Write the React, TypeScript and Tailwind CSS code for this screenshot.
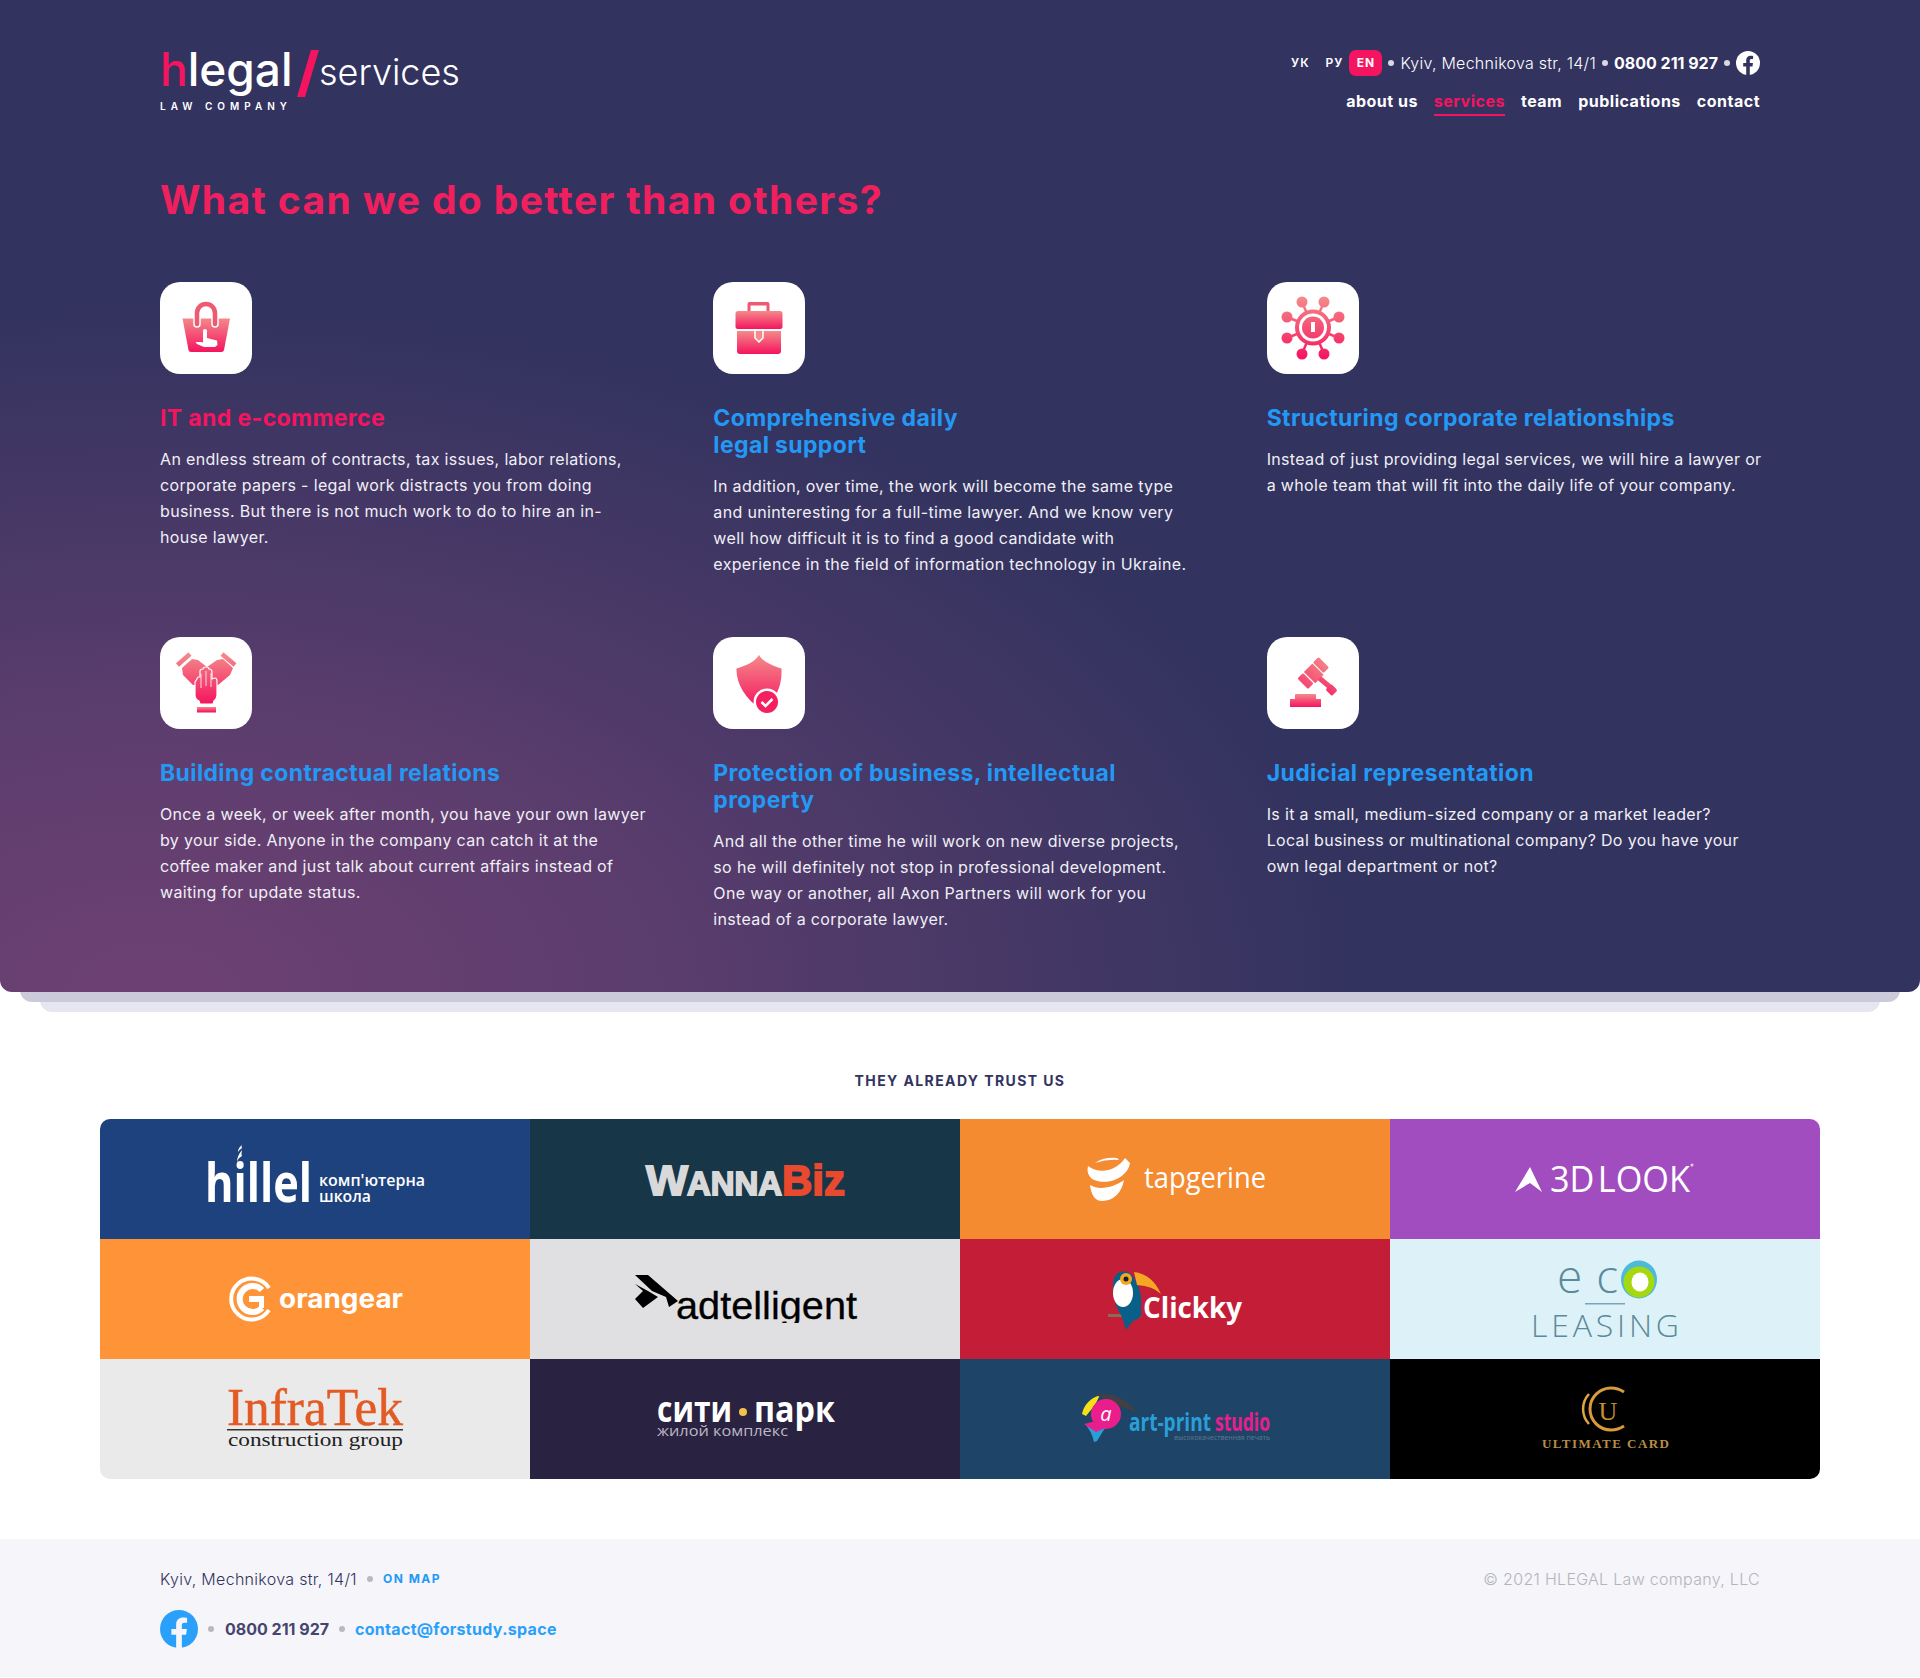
import React from 'react';

const font = "font-['Inter','Noto_Sans',sans-serif]";

const IconGrad = ({ id, y1 = 22, y2 = 72 }: { id: string; y1?: number; y2?: number }) => (
  <defs>
    <linearGradient id={id} x1="0" y1={y1} x2="0" y2={y2} gradientUnits="userSpaceOnUse">
      <stop offset="0" stopColor="#f48a8a" />
      <stop offset="1" stopColor="#f5145f" />
    </linearGradient>
  </defs>
);

const BagIcon = () => (
  <svg viewBox="0 0 92 92" className="h-[92px] w-[92px]">
    <IconGrad id="g1" y1={36} y2={70} />
    <path d="M22.500 36.500h47.500l-6 31.500q-.5 2-2.500 2H31q-2 0-2.500-2z" fill="url(#g1)" />
    <path d="M37 42V31a9 9 0 0 1 18 0v11" fill="none" stroke="#fff" strokeWidth="7.500" strokeLinecap="round" />
    <path d="M37 42V31a9 9 0 0 1 18 0v11" fill="none" stroke="#ee5a72" strokeWidth="4.500" strokeLinecap="round" />
    <path d="M43 48q2-2 4 0v8l10 2.500.5 4.500-2.500 2H44l-7-3-1.500-2h5.500l2 .5z" fill="#fff" />
  </svg>
);

const CaseIcon = () => (
  <svg viewBox="0 0 92 92" className="h-[92px] w-[92px]">
    <IconGrad id="g2b" y1={49} y2={72} />
    <IconGrad id="g2c" y1={29} y2={47} />
    <path d="M34.500 29v-7q0-2 2-2h18q2 0 2 2v7h-3v-5.500H37.500V29z" fill="#ee5a72" />
    <rect x="22.500" y="29" width="47" height="18" rx="2.500" fill="url(#g2c)" />
    <path d="M24 49h44v20q0 3-3 3H27q-3 0-3-3z" fill="url(#g2b)" />
    <path d="M42 49v7l4 4 4-4v-7" fill="#f58a8a" stroke="#fff" strokeWidth="1.500" />
  </svg>
);

const VirusIcon = () => {
  const nodes = [[35, 20], [57, 20], [20, 35], [72, 35], [20, 56], [72, 56], [35, 72], [57, 72]];
  return (
    <svg viewBox="0 0 92 92" className="h-[92px] w-[92px]">
      <IconGrad id="g3" y1={15} y2={77} />
      {nodes.map(([x, y]) => (
        <g key={`${x}-${y}`}>
          <line x1={x} y1={y} x2="46" y2="45.500" stroke="url(#g3)" strokeWidth="2.500" />
          <circle cx={x} cy={y} r="5.500" fill="url(#g3)" />
        </g>
      ))}
      <circle cx="46" cy="45.500" r="18" fill="url(#g3)" />
      <circle cx="46" cy="45.500" r="14" fill="#fff" />
      <circle cx="46" cy="45.500" r="11" fill="url(#g3)" />
      <rect x="44" y="40" width="4" height="10" fill="#fff" />
    </svg>
  );
};

const HandsIcon = () => (
  <svg viewBox="0 0 92 92" className="h-[92px] w-[92px]">
    <IconGrad id="g4" y1={17} y2={67} />
    <IconGrad id="g4b" y1={70} y2={75} />
    <g stroke="url(#g4)" strokeWidth="4.500">
      <line x1="17.500" y1="28" x2="30" y2="17" />
      <line x1="62" y1="17" x2="75" y2="28" />
    </g>
    <path d="M22 31 32 22l6 1 9 7 10-7 6-1 10 9-3 7-12 10H33L23 38z" fill="url(#g4)" />
    <path d="M37 42q0-2 2-2h1v-6q0-2 3-2 0-2 3-2t3 2q3 0 3 3v7l3-1q2 0 2 3v14q0 4-3 6l-1 3H40l-1-3q-4-2-4-6V45z" fill="url(#g4)" stroke="#fff" strokeWidth="1.200" />
    <g stroke="#fff" strokeWidth="1" opacity="0.8">
      <line x1="41" y1="37" x2="41" y2="51" />
      <line x1="46" y1="34" x2="46" y2="49" />
      <line x1="51" y1="36" x2="51" y2="50" />
    </g>
    <rect x="37" y="70" width="19" height="5.500" fill="url(#g4b)" />
  </svg>
);

const ShieldIcon = () => (
  <svg viewBox="0 0 92 92" className="h-[92px] w-[92px]">
    <IconGrad id="g5" y1={18} y2={72} />
    <path d="M46 18c4 7 14 11 22.500 13.500C69 42 67 50 63 58L48 72C32 62 23 46 23.500 31.500 32 29 42 25 46 18z" fill="url(#g5)" />
    <circle cx="54" cy="65" r="13.500" fill="#fff" />
    <circle cx="54" cy="65" r="11" fill="#f5205f" />
    <path d="M48.500 65l4 4 7-7" fill="none" stroke="#fff" strokeWidth="2.500" />
  </svg>
);

const GavelIcon = () => (
  <svg viewBox="0 0 92 92" className="h-[92px] w-[92px]">
    <IconGrad id="g6" y1={20} y2={70} />
    <IconGrad id="g6b" y1={57} y2={70} />
    <g fill="url(#g6)">
      <rect x="46.500" y="24" width="15" height="8" rx="1.500" transform="rotate(45 54 28)" />
      <rect x="31" y="40" width="15" height="8" rx="1.500" transform="rotate(45 38.500 44)" />
      <rect x="38.800" y="30.300" width="16" height="12" transform="rotate(45 46.800 36.300)" />
      <rect x="50" y="45" width="20" height="5" rx="1" transform="rotate(40 60 47.500)" />
      <rect x="60" y="49" width="9" height="8" rx="1.500" transform="rotate(45 64.500 53)" />
    </g>
    <path d="M29 57h19q1 0 1 1v5H28v-5q0-1 1-1z" fill="url(#g6b)" />
    <rect x="23" y="62" width="31" height="8" fill="url(#g6b)" />
  </svg>
);

const cards = [
  {
    icon: <BagIcon />,
    title: ['IT and e-commerce'],
    active: true,
    text: ['An endless stream of contracts, tax issues, labor relations,', 'corporate papers - legal work distracts you from doing', 'business. But there is not much work to do to hire an in-', 'house lawyer.'],
  },
  {
    icon: <CaseIcon />,
    title: ['Comprehensive daily', 'legal support'],
    text: ['In addition, over time, the work will become the same type', 'and uninteresting for a full-time lawyer. And we know very', 'well how difficult it is to find a good candidate with', 'experience in the field of information technology in Ukraine.'],
  },
  {
    icon: <VirusIcon />,
    title: ['Structuring corporate relationships'],
    text: ['Instead of just providing legal services, we will hire a lawyer or', 'a whole team that will fit into the daily life of your company.'],
  },
  {
    icon: <HandsIcon />,
    title: ['Building contractual relations'],
    text: ['Once a week, or week after month, you have your own lawyer', 'by your side. Anyone in the company can catch it at the', 'coffee maker and just talk about current affairs instead of', 'waiting for update status.'],
  },
  {
    icon: <ShieldIcon />,
    title: ['Protection of business, intellectual', 'property'],
    text: ['And all the other time he will work on new diverse projects,', 'so he will definitely not stop in professional development.', 'One way or another, all Axon Partners will work for you', 'instead of a corporate lawyer.'],
  },
  {
    icon: <GavelIcon />,
    title: ['Judicial representation'],
    text: ['Is it a small, medium-sized company or a market leader?', 'Local business or multinational company? Do you have your', 'own legal department or not?'],
  },
];

const Fb = ({ size, bg, fg }: { size: string; bg: string; fg: string }) => (
  <svg viewBox="0 0 40 40" className={size}>
    <circle cx="20" cy="20" r="20" fill={bg} />
    <path d="M17 40V26h-5v-6h5v-4.500C17 10.500 20 8 24.500 8c2 0 3.500.3 4 .4v5h-2.800c-2.200 0-2.700 1.200-2.700 2.800V20h5.300l-.8 6H23v14z" fill={fg} />
  </svg>
);

const Dot = ({ color }: { color: string }) => <span className={`h-[6px] w-[6px] rounded-full ${color}`} />;

const Logo = ({ bg, children }: { bg: string; children: React.ReactNode }) => (
  <div className={`flex h-[120px] items-center justify-center ${bg}`}>
    <svg viewBox="0 0 430 120" className="h-[120px] w-[430px]">
      {children}
    </svg>
  </div>
);

const logos = [
  <Logo key="hillel" bg="bg-[#1d427e]">
    <text x="105" y="83" fontFamily="Open Sans" fontWeight="700" fontSize="54" fill="#fff" textLength="107" lengthAdjust="spacingAndGlyphs">hillel</text>
    <path d="M137 43q0-6 5-12-1 4 0 6-4 2-5 6zM138 33q0-4 4-7-1 2 0 3-3 2-4 4z" fill="#fff" />
    <text x="219" y="67" fontFamily="Open Sans" fontWeight="600" fontSize="16" fill="#fff" textLength="106" lengthAdjust="spacingAndGlyphs">комп'ютерна</text>
    <text x="219" y="83" fontFamily="Open Sans" fontWeight="600" fontSize="16" fill="#fff" textLength="52" lengthAdjust="spacingAndGlyphs">школа</text>
  </Logo>,
  <Logo key="wanna" bg="bg-[#173648]">
    <g fontFamily="Liberation Sans" fontWeight="700" strokeWidth="1.800">
      <text x="116" y="76" fontSize="42" fill="#d9d9d9" stroke="#d9d9d9" textLength="42" lengthAdjust="spacingAndGlyphs">W</text>
      <text x="157" y="76" fontSize="34" fill="#d9d9d9" stroke="#d9d9d9" textLength="95" lengthAdjust="spacingAndGlyphs">ANNA</text>
      <text x="252" y="76" fontSize="42" fill="#e8492f" stroke="#e8492f" textLength="63" lengthAdjust="spacingAndGlyphs">Biz</text>
    </g>
  </Logo>,
  <Logo key="tap" bg="bg-[#f58b31]">
    <path d="M135 44q8-6 22-5l2 2q-12-1-24 3zM128 47c10 8 28 6 37-8l5 5c-2 14-22 24-38 16q-6-5-4-13zM130 66c10 6 24 2 34-5-2 12-10 21-22 21q-10 0-12-16z" fill="#fff" />
    <text x="184" y="69" fontFamily="Open Sans" fontSize="29" fill="#fff" textLength="122" lengthAdjust="spacingAndGlyphs">tapgerine</text>
  </Logo>,
  <Logo key="look" bg="bg-[#a14dc0]">
    <path d="M125 73l15-25 12 25-12-9z" fill="#fff" />
    <text x="160" y="73" fontFamily="Open Sans" fontSize="37" fill="#fff" wordSpacing="-6" textLength="140" lengthAdjust="spacingAndGlyphs">3D LOOK</text>
    <circle cx="302" cy="46" r="1.500" fill="#e5c9ee" />
  </Logo>,
  <Logo key="orange" bg="bg-[#ff9337]">
    <path d="M169 49a20.500 20.500 0 1 0 0 22" fill="none" stroke="#fff" strokeWidth="4" />
    <path d="M162 51a13 13 0 1 0 0 18" fill="none" stroke="#fff" strokeWidth="6" />
    <rect x="149" y="57" width="15" height="6" fill="#fff" />
    <rect x="159" y="57" width="5" height="12" fill="#fff" />
    <text x="179" y="69" fontFamily="Inter" fontWeight="700" fontSize="27" fill="#fff" textLength="124" lengthAdjust="spacingAndGlyphs">orangear</text>
  </Logo>,
  <Logo key="ad" bg="bg-[#e0e0e2]">
    <defs>
      <clipPath id="adclip">
        <rect x="100" y="30" width="240" height="54" />
      </clipPath>
    </defs>
    <path d="M105 36h13l30 26-9 6-3-10-14-6z" fill="#000" />
    <path d="M105 45l13 7 10 6-15 11-8-9 8-8z" fill="#000" />
    <text x="146" y="80" clipPath="url(#adclip)" fontFamily="Liberation Sans" fontSize="38" fill="#000" stroke="#000" strokeWidth="0.300" textLength="181" lengthAdjust="spacingAndGlyphs">adtelligent</text>
  </Logo>,
  <Logo key="clickky" bg="bg-[#c41d37]">
    <rect x="148" y="75" width="33" height="3" fill="#8a6a5a" />
    <path d="M160 33q10-2 14 6 5 8 7 18v20q-4 4-8 5l-7 9-4-13q-9-14-9-30 0-13 7-15z" fill="#086088" />
    <ellipse cx="163" cy="54" rx="10" ry="14" fill="#fff" />
    <circle cx="166" cy="40" r="6" fill="#f5a623" />
    <circle cx="166" cy="40" r="2.500" fill="#123" />
    <path d="M174 33q18 2 27 22-8-8-24-9z" fill="#f5a623" />
    <text x="183" y="79" fontFamily="Open Sans" fontWeight="700" fontSize="29" fill="#fff" textLength="99" lengthAdjust="spacingAndGlyphs">Clickky</text>
  </Logo>,
  <Logo key="eco" bg="bg-[#dcf2f8]">
    <text x="167" y="54" fontFamily="Open Sans" fontWeight="300" fontSize="46" fill="#5c8a9b" textLength="61" lengthAdjust="spacing">ec</text>
    <ellipse cx="249" cy="40.500" rx="18" ry="19" fill="#4fb9d8" />
    <ellipse cx="249" cy="43" rx="15.500" ry="15.500" fill="#a6d80f" />
    <ellipse cx="250" cy="43" rx="8.500" ry="9.500" fill="#fff" />
    <rect x="195" y="64" width="40" height="1.500" fill="#7ba4b2" />
    <text x="141" y="98" fontFamily="Open Sans" fontWeight="300" fontSize="32" fill="#5c8a9b" textLength="148" lengthAdjust="spacing">LEASING</text>
  </Logo>,
  <Logo key="infra" bg="bg-[#eaeaea]">
    <text x="127" y="66" fontFamily="Liberation Serif" fontSize="52" fill="#e35b24" stroke="#e35b24" strokeWidth="0.500" textLength="176" lengthAdjust="spacingAndGlyphs">InfraTek</text>
    <rect x="127" y="70" width="176" height="1.500" fill="#333" />
    <text x="128" y="87" fontFamily="Liberation Serif" fontSize="19" fill="#222" textLength="175" lengthAdjust="spacingAndGlyphs">construction group</text>
  </Logo>,
  <Logo key="city" bg="bg-[#292240]">
    <text x="127" y="63" fontFamily="Open Sans" fontWeight="700" fontSize="36" fill="#fff" textLength="75" lengthAdjust="spacingAndGlyphs">сити</text>
    <circle cx="213" cy="53" r="4" fill="#f0c24b" />
    <text x="224" y="63" fontFamily="Open Sans" fontWeight="700" fontSize="36" fill="#fff" textLength="81" lengthAdjust="spacingAndGlyphs">парк</text>
    <text x="127" y="77" fontFamily="Open Sans" fontSize="15" fill="#bcb8c6" textLength="131" lengthAdjust="spacingAndGlyphs">жилой комплекс</text>
  </Logo>,
  <Logo key="art" bg="bg-[#1e4468]">
    <path d="M122 55q3-14 18-19l-5 10-9 11z" fill="#f7e017" />
    <path d="M136 36q24-4 41 17l-18-6z" fill="#414042" />
    <circle cx="146" cy="55" r="15" fill="#e91e8c" />
    <path d="M125 65l14 5 6-1-8 13-3 1q-2-10-9-18z" fill="#2a9fd6" />
    <path d="M124 65l12-3 9 7-9 4z" fill="#e91e8c" />
    <text x="146" y="62" fontFamily="Open Sans" fontStyle="italic" fontSize="20" fill="#fff" textAnchor="middle">a</text>
    <text x="169" y="72" fontFamily="Open Sans" fontWeight="700" fontSize="25" fill="#2a9fd6" textLength="82" lengthAdjust="spacingAndGlyphs">art-print</text>
    <text x="255" y="72" fontFamily="Open Sans" fontWeight="700" fontSize="25" fill="#e91e8c" textLength="55" lengthAdjust="spacingAndGlyphs">studio</text>
    <text x="214" y="81" fontFamily="Open Sans" fontSize="7" fill="#5f7a92" textLength="96" lengthAdjust="spacingAndGlyphs">высококачественная печать</text>
  </Logo>,
  <Logo key="uc" bg="bg-black">
    <path d="M234 33q-6-4-13-4a21 21 0 0 0 0 42q7 0 13-4" fill="none" stroke="#d99a3a" strokeWidth="3" />
    <path d="M199 35a22 22 0 0 0 0 30" fill="none" stroke="#e0a545" strokeWidth="2.500" />
    <text x="218" y="61" fontFamily="Liberation Serif" fontSize="26" fill="#c48c34" textAnchor="middle">U</text>
    <text x="152" y="89" fontFamily="Liberation Serif" fontWeight="700" fontSize="13" fill="#b88d44" textLength="127" lengthAdjust="spacing">ULTIMATE CARD</text>
  </Logo>,
];

const navItems = ['about us', 'services', 'team', 'publications', 'contact'];

export default function App() {
  return (
    <div className={`${font} bg-white`}>
      <div className="pb-5">
        <div className="relative">
          <div className="absolute inset-x-10 bottom-[-20px] h-10 rounded-b-[12px] bg-[#e7e6f0]" />
          <div className="absolute inset-x-5 bottom-[-10px] h-10 rounded-b-[12px] bg-[#cbcadb]" />
          <div className="relative h-[992px] rounded-b-[12px] bg-[#33335f] bg-[radial-gradient(ellipse_1200px_680px_at_8%_100%,#6d4072_0%,#5f3e6f_35%,#33335f_100%)] px-40 text-white">
            <header className="flex justify-between pt-[50px]">
              <div className="flex items-start">
                <div className="mt-[-4px]">
                  <div className="flex items-start">
                    <span className="text-[46px] font-medium leading-[46px] text-white">
                      <span className="text-[#f5145f]">h</span>legal
                    </span>
                    <span className="ml-[11px] mt-[4px] h-[47px] w-[7.5px] skew-x-[-16.5deg] bg-[#f5145f]" />
                  </div>
                  <div className="mt-[3px] text-[10px] font-semibold leading-[12px] tracking-[5px]">LAW COMPANY</div>
                </div>
                <span className="ml-[8px] mt-[-2px] text-[36px] font-light leading-[48px]">services</span>
              </div>
              <div className="flex flex-col items-end">
                <div className="flex h-[26px] items-center gap-[6px] text-[16px]">
                  <span className="text-[12px] font-semibold tracking-[1px]">УК</span>
                  <span className="ml-[10px] text-[12px] font-semibold tracking-[1px]">РУ</span>
                  <span className="flex h-[26px] w-[33px] items-center justify-center rounded-[7px] bg-[#f5145f] text-[12px] font-bold tracking-[1px]">EN</span>
                  <Dot color="bg-[#d8d8e4]" />
                  <span className="font-light tracking-[0.25px]">Kyiv, Mechnikova str, 14/1</span>
                  <Dot color="bg-[#d8d8e4]" />
                  <span className="font-bold">0800 211 927</span>
                  <Dot color="bg-[#d8d8e4]" />
                  <Fb size="h-6 w-6" bg="#fff" fg="#33335f" />
                </div>
                <nav className="mt-[15px] flex gap-4 text-[16px] font-bold leading-[20px] tracking-[0.5px]">
                  {navItems.map((n) => (
                    <a key={n} className={n === 'services' ? 'border-b-2 border-[#f5145f] pb-[3px] text-[#f5145f]' : 'pb-[3px]'}>{n}</a>
                  ))}
                </nav>
              </div>
            </header>
            <h1 className="mt-[60px] text-[39px] font-bold leading-[48px] tracking-[1.37px] text-[#f0205f]">What can we do better than others?</h1>
            <div className="mt-[58px] grid grid-cols-3 gap-x-[60px] gap-y-[60px]">
              {cards.map((c) => (
                <div key={c.title[0]}>
                  <div className="h-[92px] w-[92px] rounded-[20px] bg-white">{c.icon}</div>
                  <h3 className={`mt-[31px] text-[23px] font-bold leading-[27px] tracking-[0.37px] ${c.active ? 'text-[#f5145f]' : 'text-[#2399f6]'}`}>
                    {c.title.map((t) => <div key={t}>{t}</div>)}
                  </h3>
                  <div className="mt-[14px] text-[16px] font-normal leading-[26px] tracking-[0.34px] text-[#f0eff5]">
                    {c.text.map((t) => <div key={t} className="whitespace-nowrap">{t}</div>)}
                  </div>
                </div>
              ))}
            </div>
          </div>
        </div>
      </div>
      <section className="pt-[59px]">
        <h2 className="text-center text-[14px] font-bold leading-[20px] tracking-[1.4px] text-[#33335f]">THEY ALREADY TRUST US</h2>
        <div className="mx-[100px] mt-[28px] grid grid-cols-4 overflow-hidden rounded-[10px]">{logos}</div>
      </section>
      <footer className="mt-[60px] flex h-[138px] justify-between bg-[#f5f5fa] px-40 pt-[30px]">
        <div>
          <div className="flex h-[20px] items-center gap-[10px] text-[16px] font-light tracking-[0.3px] text-[#33335f]">
            <span>Kyiv, Mechnikova str, 14/1</span>
            <Dot color="bg-[#b8b8c0]" />
            <span className="text-[12px] font-bold tracking-[1.5px] text-[#2399f6]">ON MAP</span>
          </div>
          <div className="mt-[21px] flex h-[38px] items-center gap-[10px] text-[16px] font-bold">
            <Fb size="h-[38px] w-[38px]" bg="#2aa0fb" fg="#f5f5fa" />
            <Dot color="bg-[#b8b8c0]" />
            <span className="ml-[1px] text-[#45456e]">0800 211 927</span>
            <Dot color="bg-[#b8b8c0]" />
            <span className="tracking-[0.3px] text-[#2aa0fb]">contact@forstudy.space</span>
          </div>
        </div>
        <div className="text-[16px] font-light leading-[20px] tracking-[0.3px] text-[#b4b4bc]">© 2021 HLEGAL Law company, LLC</div>
      </footer>
    </div>
  );
}
